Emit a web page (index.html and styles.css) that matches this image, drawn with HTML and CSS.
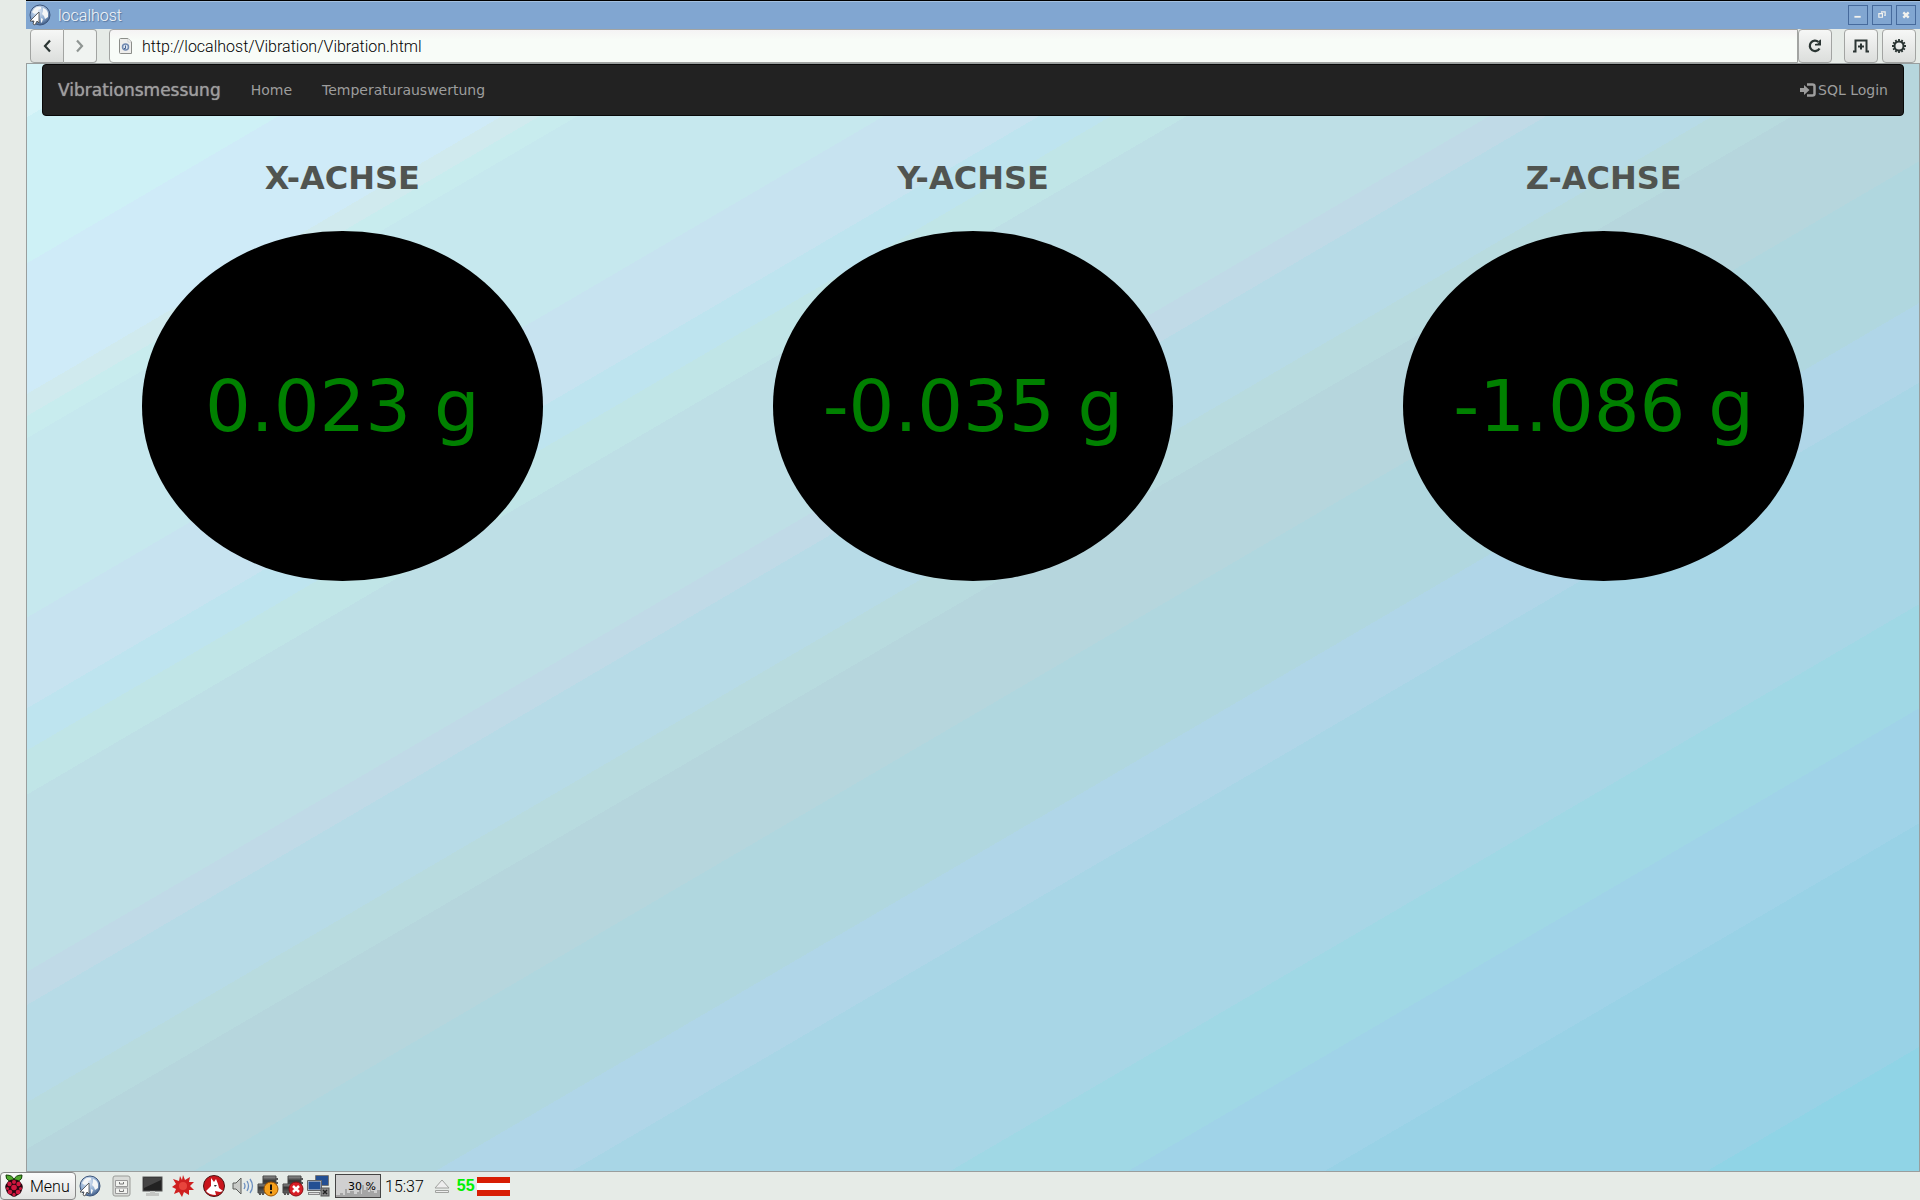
FILE: index.html
```html
<!DOCTYPE html>
<html lang="de">
<head>
<meta charset="utf-8">
<title>localhost</title>
<link rel="stylesheet" href="styles.css">
</head>
<body>
<svg class="defs" aria-hidden="true">
  <defs>
    <radialGradient id="ball" cx="40%" cy="30%" r="75%"><stop offset="0" stop-color="#dfe9f5"/><stop offset="0.6" stop-color="#8facd0"/><stop offset="1" stop-color="#34527e"/></radialGradient>
    <linearGradient id="metal" x1="0" y1="0" x2="0" y2="1"><stop offset="0" stop-color="#999"/><stop offset="0.4" stop-color="#333"/><stop offset="1" stop-color="#666"/></linearGradient>
    <symbol id="globe" viewBox="0 0 22 22">
      <circle cx="11" cy="11" r="10" fill="url(#ball)" stroke="#3d567c"/>
      <path d="M6 4Q9 2 12 3L12 5L9 6L9 8L6 10L4 9L3 8ZM14 4Q18 5 19 9L19 13L16 15L15 12L13 10L14 7ZM12 14L14 15L13 18L12 19Z" fill="#f4f6f6"/>
      <path d="M10 8V19L8 17L6 21L4 20L5 17H1Z" fill="#fff" stroke="#444" stroke-width=".8"/>
    </symbol>
    <symbol id="chip" viewBox="0 0 24 24">
      <path d="M7 2H20V14H7Z" fill="url(#metal)" stroke="#444"/><path d="M2 10H15V19H2Z" fill="url(#metal)" stroke="#444"/><path d="M4 19V21M7 19V21M20 5H22M20 9H22" stroke="#555" stroke-width="2"/>
    </symbol>
  </defs>
</svg>
<div class="window">
  <header class="titlebar">
    <svg class="globe"><use href="#globe"/></svg>
    <span class="window-title">localhost</span>
    <button class="wm" aria-label="Minimieren"><svg viewBox="0 0 20 20"><path d="M6 12H13" stroke="#f2f2ee" stroke-width="2"/></svg></button>
    <button class="wm" aria-label="Wiederherstellen"><svg viewBox="0 0 20 20"><path d="M9.500 7.500V6.500H13.500V10.500H12.500M6.500 8.500H10.500V12.500H6.500Z" fill="none" stroke="#f2f2ee" stroke-width="1.300"/></svg></button>
    <button class="wm" aria-label="Schließen"><svg viewBox="0 0 20 20"><path d="M7 7L13 13M13 7L7 13" stroke="#f2f2ee" stroke-width="2.600"/></svg></button>
  </header>
  <div class="toolbar">
    <div class="history">
      <button class="tool back" aria-label="Zurück"><svg viewBox="0 0 20 20"><path d="M13 4.500L8 10L13 15.500" fill="none" stroke="#2b3533" stroke-width="2.200"/></svg></button>
      <button class="tool forward" aria-label="Vorwärts" disabled><svg viewBox="0 0 20 20"><path d="M7 4.500L12 10L7 15.500" fill="none" stroke="#8f9593" stroke-width="2.200"/></svg></button>
    </div>
    <div class="location">
      <div class="address">
        <svg class="page-icon" viewBox="0 0 14 16"><path d="M1.500 .5H9L12.500 4V15.500H1.500Q.5 15.500 .5 14.500V1.500Q.5 .5 1.500 .5Z" fill="#eeeeec" stroke="#8b8d89"/><path d="M9 .5V4H12.500Z" fill="#fff" stroke="#bbb" stroke-width=".6"/><circle cx="6.500" cy="9" r="3" fill="#e0e8f2" stroke="#7189b0" stroke-width="1.500"/><path d="M6.500 7.500V10.500H5" stroke="#44618f" fill="none"/></svg>
        <input class="url" type="text" aria-label="Adresse" value="http://localhost/Vibration/Vibration.html">
      </div>
      <button class="tool" aria-label="Neu laden"><svg viewBox="0 0 20 20"><path d="M14.500 12.500A5.200 5.200 0 1 1 13.500 6" fill="none" stroke="#2b3533" stroke-width="2.300"/><path d="M16 3.500V9.500H10V8L13 7.500L14.500 4Z" fill="#2b3533"/></svg></button>
    </div>
    <button class="tool tab" aria-label="Neuer Tab"><svg viewBox="0 0 20 20"><path d="M2 15.500H4.500V4.500H15.500V15.500H18M10 7.500V13.500M7 10.500H13" fill="none" stroke="#2b3533" stroke-width="2"/></svg></button>
    <button class="tool" aria-label="Einstellungen"><svg viewBox="0 0 20 20"><circle cx="10" cy="10" r="4.500" fill="none" stroke="#2b3533" stroke-width="2"/><path d="M10 3V5.500M10 14.500V17M3 10H5.500M14.500 10H17M6.500 4L7.700 6.200M13.500 4L12.300 6.200M6.500 16L7.700 13.800M13.500 16L12.300 13.800M4 6.500L6.200 7.700M16 6.500L13.800 7.700M4 13.500L6.200 12.300M16 13.500L13.800 12.300" stroke="#2b3533" stroke-width="1.800"/></svg></button>
  </div>
  <div class="page">
    <nav class="navbar">
      <a class="brand" href="#">Vibrationsmessung</a>
      <a class="nav-link" href="#">Home</a>
      <a class="nav-link" href="#">Temperaturauswertung</a>
      <a class="nav-link login" href="#"><svg viewBox="0 0 16 14"><path d="M0 5H4V2L9.500 7L4 12V9H0Z" fill="#9d9d9d"/><path d="M7 1.500H12.500Q14.500 1.500 14.500 3.500V10.500Q14.500 12.500 12.500 12.500H7" fill="none" stroke="#9d9d9d" stroke-width="2.500"/></svg>SQL Login</a>
    </nav>
    <main class="axes">
      <section class="axis"><h2>X-ACHSE</h2><div class="gauge">0.023 g</div></section>
      <section class="axis"><h2>Y-ACHSE</h2><div class="gauge">-0.035 g</div></section>
      <section class="axis"><h2>Z-ACHSE</h2><div class="gauge">-1.086 g</div></section>
    </main>
  </div>
</div>
<footer class="taskbar">
  <button class="menu"><svg viewBox="0 0 20 24"><path d="M10 6Q9 1 2 1Q1 5 6 7.500ZM10 6Q11 1 18 1Q19 5 14 7.500Z" fill="#4fa82c" stroke="#173d0b"/><path d="M10 5.500Q15 5 17 9Q20 12 18 16Q17 20 13 21.500Q10 24 7 21.500Q3 20 2 16Q0 12 3 9Q5 5 10 5.500Z" fill="#2a0610"/><g fill="#d0173f"><circle cx="10" cy="8" r="2"/><circle cx="5.500" cy="10" r="2.200"/><circle cx="14.500" cy="10" r="2.200"/><circle cx="10" cy="13.500" r="2.800"/><circle cx="3.500" cy="14.500" r="1.500"/><circle cx="16.500" cy="14.500" r="1.500"/><circle cx="6" cy="18" r="2.300"/><circle cx="14" cy="18" r="2.300"/><circle cx="10" cy="20.500" r="1.700"/></g></svg>Menu</button>
  <div class="launchers">
    <button class="icon" aria-label="Webbrowser"><svg><use href="#globe"/></svg></button>
    <button class="icon" aria-label="Dateimanager"><svg viewBox="0 0 22 22"><rect x="3" y="1" width="17" height="20" rx="2" fill="#d9dbd8" stroke="#9a9c98"/><path d="M5.500 5.500H17.500V11.500H5.500ZM5.500 13H17.500V18.500H5.500Z" fill="#f2f3f0" stroke="#999"/><path d="M9.500 7V9H13.500V7M9.500 14.500V16.500H13.500V14.500" fill="none" stroke="#777"/></svg></button>
    <button class="icon" aria-label="Terminal"><svg viewBox="0 0 22 22"><rect x="2" y="2" width="19" height="14" fill="#222" stroke="#555"/><path d="M3 3H20V5L3 13Z" fill="#454545"/><path d="M9 16H14V18H18V21H5V18H9Z" fill="#c5c7c4"/></svg></button>
    <button class="icon" aria-label="Mathematica"><svg viewBox="0 0 22 22"><path d="M11 0L13 5L18 2L17 7L22 7L18 11L22 15L17 15L17 20L12 17L10 22L7 17L2 19L4 14L0 12L4 9L1 4L7 6L8 1L10 5Z" fill="#cf2020"/><circle cx="11" cy="11" r="4" fill="#e8443c"/></svg></button>
    <button class="icon" aria-label="Wolfram"><svg viewBox="0 0 22 22"><circle cx="11" cy="11" r="10.500" fill="#c9151c" stroke="#4c1515"/><path d="M8 3L11 7L13 4L15 9L16 13L20 16L17 17L12 16L13 20Q6 20 3 16L8 11Z" fill="#fff"/><path d="M11 10L14 10L12 12Z" fill="#333"/></svg></button>
  </div>
  <div class="tray">
    <svg viewBox="0 0 24 24"><path d="M2 9H5L10 4V20L5 15H2Z" fill="#c9cbc8" stroke="#5b5d5a"/><path d="M13 9Q15 12 13 15M16 7Q19 12 16 17M19 5Q24 12 19 19" fill="none" stroke="#6b8fc0" stroke-width="1.300"/></svg>
    <svg viewBox="0 0 24 24"><use href="#chip"/><circle cx="15" cy="15" r="7" fill="#f5a01c" stroke="#9c5300"/><path d="M15 10.500V16M15 17.500V19.500" stroke="#111" stroke-width="2"/></svg>
    <svg viewBox="0 0 24 24"><use href="#chip"/><circle cx="15" cy="15" r="7" fill="#d81e26" stroke="#8a0d12"/><path d="M12 12L18 18M18 12L12 18" stroke="#fff" stroke-width="2.500"/></svg>
    <svg viewBox="0 0 24 24"><rect x="10" y="2" width="12" height="9" fill="#234f93"/><path d="M9.500 1.500H22.500V11.500H9.500Z" fill="none" stroke="#777"/><rect x="2" y="7" width="13" height="9" fill="#234f93" stroke="#ddd"/><path d="M1.500 6.500H15.500V16.500H1.500Z" fill="none" stroke="#666"/><path d="M2 19.500H14" stroke="#888" stroke-width="3"/><path d="M3 19.500H13" stroke="#ddd"/><rect x="15" y="14" width="8" height="8" fill="#888" stroke="#555"/><path d="M17 16L21 20M21 16L17 20" stroke="#222" stroke-width="1.500"/></svg>
  </div>
  <div class="cpu"><svg viewBox="0 0 44 22" preserveAspectRatio="none"><path d="M0 22V20H4V18H7V20H9V14H11V18H14V16H18V19H21V17H23V14H25V19H26V10H28V15H30V12H32V17H34V8H35V16H38V18H41V15H44V22Z" fill="#a5a5a5"/></svg><span>30 %</span></div>
  <time class="clock">15:37</time>
  <svg class="eject" viewBox="0 0 16 16"><path d="M8 2L15 10H1ZM1.500 12.500H14.500V14.500H1.500Z" fill="#eee" stroke="#a0a29f"/></svg>
  <span class="temp">55</span>
  <span class="flag" role="img" aria-label="Österreich"></span>
</footer>
</body>
</html>
```
FILE: styles.css
```css
* { box-sizing: border-box; }

body {
  margin: 0;
  min-height: 100vh;
  display: flex;
  flex-direction: column;
  background: #e6ebe7;
  font-family: Roboto, "Liberation Sans", sans-serif;
  font-size: 16px;
  font-weight: 300;
  color: #000;
}

button {
  margin: 0;
  padding: 0;
  border: 0;
  background: none;
  font: inherit;
  color: inherit;
}

svg { display: block; }
.defs { position: absolute; width: 0; height: 0; }

.window {
  flex: 1;
  display: flex;
  flex-direction: column;
  margin-left: 26px;
}

/* title bar */
.titlebar {
  display: flex;
  align-items: center;
  gap: 4px;
  height: 29px;
  padding: 0 4px 0 3px;
  border-top: 1px solid #000;
  background: #81a6d1;
  box-shadow: inset 0 1px #a3c0e0;
}
.globe { width: 22px; height: 22px; }
.window-title {
  flex: 1;
  padding-left: 3px;
  color: #f4f6f8;
  text-shadow: 1px 1px 1px #55749c;
}
.wm { width: 20px; height: 20px; border: 1px solid #466a9c; }
.wm svg { width: 18px; height: 18px; }

/* browser toolbar */
.toolbar { display: flex; height: 34px; padding: 0 4px; }
.history { display: flex; margin-right: 12px; }
.tool {
  display: flex;
  align-items: center;
  justify-content: center;
  width: 34px;
  height: 34px;
  border: 1px solid #a2a4a2;
  border-radius: 4px;
  background: linear-gradient(#f6f7f6, #dcdedc);
}
.tool svg { width: 20px; height: 20px; }
.back { border-radius: 4px 0 0 4px; }
.forward { width: 33px; border-left: 0; border-radius: 0 4px 4px 0; background: #f0f3f1; }
.tab { margin: 0 4px 0 12px; }
.location { flex: 1; display: flex; }
.address {
  flex: 1;
  display: flex;
  align-items: center;
  gap: 9px;
  padding-left: 9px;
  border: 1px solid #a2a4a2;
  border-radius: 4px 0 0 4px;
  background: linear-gradient(#f5f3f4, #f8fcf8 30%);
}
.page-icon { width: 14px; height: 16px; }
.url {
  flex: 1;
  padding: 0;
  border: 0;
  background: none;
  font: inherit;
  color: #000;
  outline: 0;
}

/* web page */
.page {
  flex: 1;
  border: 1px solid #999e9e;
  font-family: "DejaVu Sans", sans-serif;
  font-weight: 400;
  background: linear-gradient(to bottom right,
    #d8f4f8 2.4%, #cef1f6 2.4% 9%, #cfebf8 9% 14.9%, #d0eaee 14.9% 15.9%,
    #c8ecee 15.9% 16.9%, #c6e8ee 16.9% 25%, #c7e3f0 25% 29.1%, #bee4ef 29.1% 31%,
    #c0e5e7 31% 33%, #bedfe6 33% 41%, #c0dae7 41% 42.5%, #b7dbe7 42.5% 46.9%,
    #b8dbdf 46.9% 49%, #b6d6dd 49% 54.4%, #b0d7df 54.4% 60.8%, #b0d6e8 60.8% 64.4%,
    #a8d6e6 64.4% 74.4%, #a0d8e5 74.4% 79.1%, #a0d3e8 79.1% 84.3%, #99d2e6 84.3% 94.4%,
    #90d4e6 94.4%);
}
.navbar {
  display: flex;
  align-items: center;
  height: 52px;
  margin: 0 15px;
  border: 1px solid #080808;
  border-radius: 4px;
  background: #222;
}
.brand, .nav-link { padding: 0 15px; color: #9d9d9d; text-decoration: none; }
.brand { font-size: 17px; text-shadow: 0 0 1px #9d9d9d; }
.nav-link { font-size: 14px; }
.login { display: flex; align-items: center; gap: 2px; margin-left: auto; }
.login svg { width: 16px; height: 14px; }

.axes { display: grid; grid-template-columns: repeat(3, 1fr); padding-top: 45px; }
.axis { display: flex; flex-direction: column; align-items: center; padding: 0 15px; }
.axis h2 { margin: 0 0 35px; font-size: 32px; line-height: 35px; color: #505450; }
.gauge {
  display: flex;
  align-items: center;
  justify-content: center;
  width: calc(100% * 2 / 3);
  height: 350px;
  border-radius: 50%;
  background: #000;
  font-size: 72px;
  color: #008000;
  white-space: nowrap;
}

/* desktop panel */
.taskbar { display: flex; align-items: center; height: 28px; }
.menu {
  display: flex;
  align-items: center;
  gap: 6px;
  width: 76px;
  height: 28px;
  padding-left: 3px;
  border: 1px solid #888;
  border-radius: 4px;
  background: linear-gradient(#fbfbfb, #e2e4e2);
}
.menu svg { width: 20px; height: 24px; }
.launchers { display: flex; gap: 9px; margin: 0 6px 0 3px; }
.icon, .icon svg { width: 22px; height: 22px; }
.tray { display: flex; gap: 1px; }
.tray svg { width: 24px; height: 24px; }
.cpu {
  display: grid;
  width: 46px;
  height: 24px;
  margin: 0 4px 0 5px;
  border: 1px solid #444;
  background: #d0d0d0;
  font: 11px "DejaVu Sans", sans-serif;
}
.cpu svg, .cpu span { grid-area: 1 / 1; }
.cpu svg { width: 44px; height: 22px; }
.cpu span { align-self: center; padding-left: 12px; }
.eject { width: 16px; height: 16px; margin: 0 7px 0 10px; }
.temp { font: bold 16px "Liberation Sans", sans-serif; color: #00f000; }
.flag {
  width: 33px;
  height: 19px;
  margin-left: 2px;
  background: linear-gradient(#d81e05 33%, #fff 33% 67%, #d81e05 67%);
}
```
